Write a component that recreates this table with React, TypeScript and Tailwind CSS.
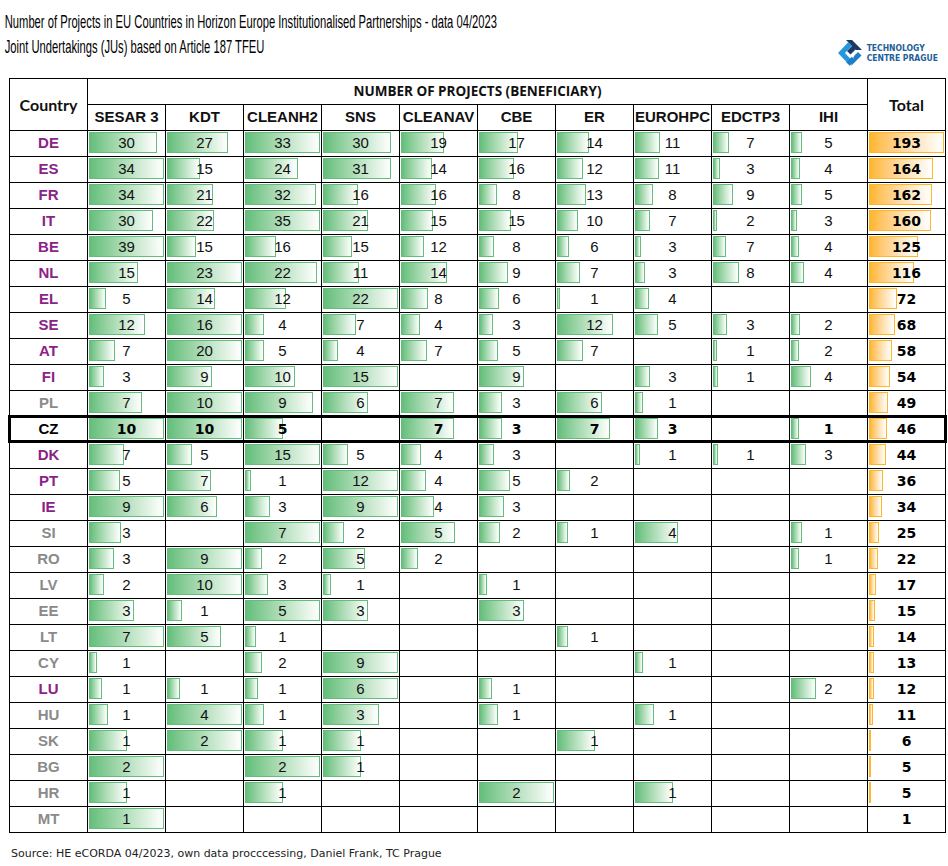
import React from "react";

type Row = { c: string; t: "eu15" | "eu13" | "cz"; v: (number | null)[] };

const _ = null;
const rows: Row[] = [
  { c: "DE", t: "eu15", v: [30, 27, 33, 30, 19, 17, 14, 11, 7, 5, 193] },
  { c: "ES", t: "eu15", v: [34, 15, 24, 31, 14, 16, 12, 11, 3, 4, 164] },
  { c: "FR", t: "eu15", v: [34, 21, 32, 16, 16, 8, 13, 8, 9, 5, 162] },
  { c: "IT", t: "eu15", v: [30, 22, 35, 21, 15, 15, 10, 7, 2, 3, 160] },
  { c: "BE", t: "eu15", v: [39, 15, 16, 15, 12, 8, 6, 3, 7, 4, 125] },
  { c: "NL", t: "eu15", v: [15, 23, 22, 11, 14, 9, 7, 3, 8, 4, 116] },
  { c: "EL", t: "eu15", v: [5, 14, 12, 22, 8, 6, 1, 4, _, _, 72] },
  { c: "SE", t: "eu15", v: [12, 16, 4, 7, 4, 3, 12, 5, 3, 2, 68] },
  { c: "AT", t: "eu15", v: [7, 20, 5, 4, 7, 5, 7, _, 1, 2, 58] },
  { c: "FI", t: "eu15", v: [3, 9, 10, 15, _, 9, _, 3, 1, 4, 54] },
  { c: "PL", t: "eu13", v: [7, 10, 9, 6, 7, 3, 6, 1, _, _, 49] },
  { c: "CZ", t: "cz", v: [10, 10, 5, _, 7, 3, 7, 3, _, 1, 46] },
  { c: "DK", t: "eu15", v: [7, 5, 15, 5, 4, 3, _, 1, 1, 3, 44] },
  { c: "PT", t: "eu15", v: [5, 7, 1, 12, 4, 5, 2, _, _, _, 36] },
  { c: "IE", t: "eu15", v: [9, 6, 3, 9, 4, 3, _, _, _, _, 34] },
  { c: "SI", t: "eu13", v: [3, _, 7, 2, 5, 2, 1, 4, _, 1, 25] },
  { c: "RO", t: "eu13", v: [3, 9, 2, 5, 2, _, _, _, _, 1, 22] },
  { c: "LV", t: "eu13", v: [2, 10, 3, 1, _, 1, _, _, _, _, 17] },
  { c: "EE", t: "eu13", v: [3, 1, 5, 3, _, 3, _, _, _, _, 15] },
  { c: "LT", t: "eu13", v: [7, 5, 1, _, _, _, 1, _, _, _, 14] },
  { c: "CY", t: "eu13", v: [1, _, 2, 9, _, _, _, 1, _, _, 13] },
  { c: "LU", t: "eu15", v: [1, 1, 1, 6, _, 1, _, _, _, 2, 12] },
  { c: "HU", t: "eu13", v: [1, 4, 1, 3, _, 1, _, 1, _, _, 11] },
  { c: "SK", t: "eu13", v: [1, 2, 1, 1, _, _, 1, _, _, _, 6] },
  { c: "BG", t: "eu13", v: [2, _, 2, 1, _, _, _, _, _, _, 5] },
  { c: "HR", t: "eu13", v: [1, _, 1, _, _, 2, _, 1, _, _, 5] },
  { c: "MT", t: "eu13", v: [1, _, _, _, _, _, _, _, _, _, 1] },
];

const cols = ["SESAR 3", "KDT", "CLEANH2", "SNS", "CLEANAV", "CBE", "ER", "EUROHPC", "EDCTP3", "IHI"];
const MAXW = 75;
const totalMax = 193;

function Logo() {
  return (
    <div className="flex items-center gap-[4px]">
      <svg width="26" height="28" viewBox="0 0 26 28">
        <polyline points="13,5 4.5,14 13,23" fill="none" stroke="#2596dd" strokeWidth="5" strokeLinejoin="miter" />
        <path d="M9 1 L15 1 L25 11 L19 11 Z" fill="#1b3a66" />
        <path d="M15.5 6.5 L19 10 L13.5 15.5 L10 12 Z" fill="#1b3a66" />
        <polyline points="11,25 16.5,19.5" fill="none" stroke="#1e7fc6" strokeWidth="5" />
        <path d="M14 27 L24.5 16.5 L21 13 L17 17 Z" fill="#1e7fc6" />
      </svg>
      <div className="font-['DejaVu_Sans_Condensed','DejaVu_Sans',sans-serif] font-bold text-[8.5px] leading-[10px] text-[#22609a]">
        <div>TECHNOLOGY</div>
        <div>CENTRE PRAGUE</div>
      </div>
    </div>
  );
}

function Cell({ v, max, bold }: { v: number | null; max: number; bold: boolean }) {
  const w = v == null ? 0 : (v / max) * MAXW;
  return (
    <div className="relative h-[26px] border-l border-t border-black flex items-center justify-center">
      {v != null && w >= 1 && (
        <div
          className="absolute left-[1px] top-[1px] h-[21px] border border-[#63be7b] bg-linear-to-r from-[#63be7b] to-white"
          style={{ width: w }}
        />
      )}
      {v != null && (
        <span
          className={
            bold
              ? "relative font-['DejaVu_Sans',sans-serif] font-bold text-[14px] text-black"
              : "relative font-['Liberation_Sans',Arial,sans-serif] text-[15px] text-[#111]"
          }
        >
          {v}
        </span>
      )}
    </div>
  );
}

function TotalCell({ v }: { v: number }) {
  const w = (v / totalMax) * MAXW;
  return (
    <div className="relative h-[26px] border-l border-t border-black flex items-center justify-center">
      {w >= 1 && (
        <div
          className="absolute left-[1px] top-[1px] h-[21px] border border-[#ffb628] bg-linear-to-r from-[#ffb628] to-white"
          style={{ width: w }}
        />
      )}
      <span className="relative font-['DejaVu_Sans',sans-serif] font-bold text-[14px] text-black">{v}</span>
    </div>
  );
}

function DataRow({ r }: { r: Row }) {
  const vals = r.v.slice(0, 10);
  const total = r.v[10] as number;
  const max = Math.max(...(vals.filter((n) => n != null) as number[]));
  const isCz = r.t === "cz";
  const labelColor = r.t === "eu15" ? "text-[#8b2288]" : r.t === "eu13" ? "text-[#8a8a8a]" : "text-black";
  return (
    <div className="relative grid grid-cols-[repeat(12,78px)]">
      <div className="h-[26px] border-l border-t border-black flex items-center justify-center">
        <span className={`font-['Liberation_Sans',Arial,sans-serif] font-bold text-[15px] ${labelColor}`}>{r.c}</span>
      </div>
      {vals.map((v, i) => (
        <Cell key={i} v={v} max={max} bold={isCz} />
      ))}
      <TotalCell v={total} />
      {isCz && (
        <div className="absolute top-[-1px] left-[-1px] right-[-2px] bottom-[-1px] border-[3px] border-black pointer-events-none" />
      )}
    </div>
  );
}

export default function App() {
  return (
    <div className="w-[948px] h-[866px] bg-white overflow-hidden">
      <div className="h-[78px] flex">
        <div className="w-[520px] shrink-0 pl-[8px] pt-[9px] font-['Liberation_Sans',Arial,sans-serif] text-[19px] leading-[25px] text-black whitespace-nowrap origin-left scale-x-[0.59]">
          <div>Number of Projects in EU Countries in Horizon Europe Institutionalised Partnerships - data 04/2023</div>
          <div>Joint Undertakings (JUs) based on Article 187 TFEU</div>
        </div>
        <div className="ml-auto pt-[39px] pr-[10px] shrink-0">
          <Logo />
        </div>
      </div>
      <div className="ml-[9px] w-[937px] border-r border-b border-black">
        <div className="grid grid-cols-[repeat(12,78px)] grid-rows-[26px_26px]">
          <div className="row-span-2 border-l border-t border-black flex items-center justify-center font-['Lato',sans-serif] font-bold text-[16px] text-[#111]">
            Country
          </div>
          <div className="col-span-10 border-l border-t border-black flex items-center justify-center font-['Open_Sans',sans-serif] font-bold text-[13.5px] text-[#111]">
            NUMBER OF PROJECTS (BENEFICIARY)
          </div>
          <div className="row-span-2 border-l border-t border-black flex items-center justify-center font-['Lato',sans-serif] font-bold text-[16px] text-[#111]">
            Total
          </div>
          {cols.map((c) => (
            <div
              key={c}
              className="border-l border-t border-black flex items-center justify-center font-['Liberation_Sans',Arial,sans-serif] font-bold text-[15px] text-[#111] whitespace-nowrap"
            >
              {c}
            </div>
          ))}
        </div>
        {rows.map((r) => (
          <DataRow key={r.c} r={r} />
        ))}
      </div>
      <div className="pl-[11px] mt-[13px] font-['DejaVu_Sans',sans-serif] text-[11px] leading-[16px] text-[#222]">
        Source: HE eCORDA 04/2023, own data procccessing, Daniel Frank, TC Prague
      </div>
    </div>
  );
}
